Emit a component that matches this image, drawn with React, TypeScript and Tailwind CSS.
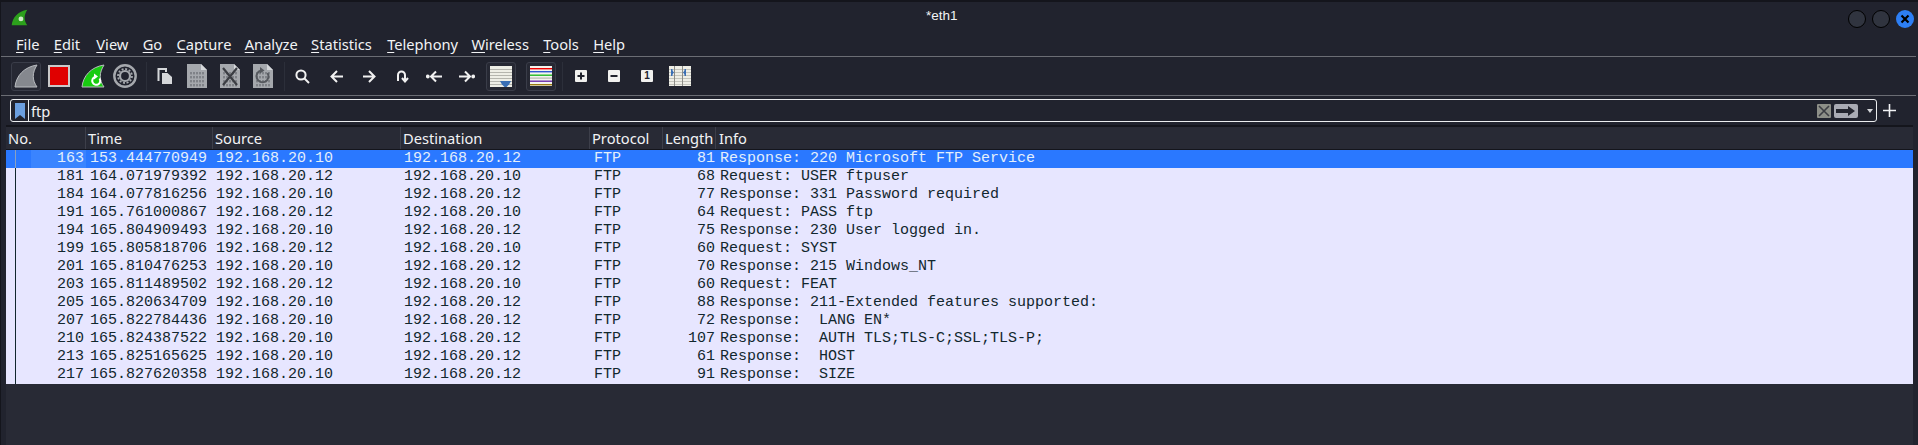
const MENUS = [
  { label: "File", gap: "" },
  { label: "Edit", gap: "" },
  { label: "View", gap: "ml-[2px]" },
  { label: "Go", gap: "" },
  { label: "Capture", gap: "" },
  { label: "Analyze", gap: "-ml-[1px]" },
  { label: "Statistics", gap: "-ml-[1px]" },
  { label: "Telephony", gap: "ml-[1px]" },
  { label: "Wireless", gap: "-ml-[1px]" },
  { label: "Tools", gap: "" },
  { label: "Help", gap: "" },
];

const COLUMNS = [
  { label: "No.", width: "w-[80px]" },
  { label: "Time", width: "w-[127px]" },
  { label: "Source", width: "w-[188px]" },
  { label: "Destination", width: "w-[189px]" },
  { label: "Protocol", width: "w-[73px]" },
  { label: "Length", width: "w-[53px]" },
];

const PACKETS = [
  ["163", "153.444770949", "192.168.20.10", "192.168.20.12", "81", "Response: 220 Microsoft FTP Service"],
  ["181", "164.071979392", "192.168.20.12", "192.168.20.10", "68", "Request: USER ftpuser"],
  ["184", "164.077816256", "192.168.20.10", "192.168.20.12", "77", "Response: 331 Password required"],
  ["191", "165.761000867", "192.168.20.12", "192.168.20.10", "64", "Request: PASS ftp"],
  ["194", "165.804909493", "192.168.20.10", "192.168.20.12", "75", "Response: 230 User logged in."],
  ["199", "165.805818706", "192.168.20.12", "192.168.20.10", "60", "Request: SYST"],
  ["201", "165.810476253", "192.168.20.10", "192.168.20.12", "70", "Response: 215 Windows_NT"],
  ["203", "165.811489502", "192.168.20.12", "192.168.20.10", "60", "Request: FEAT"],
  ["205", "165.820634709", "192.168.20.10", "192.168.20.12", "88", "Response: 211-Extended features supported:"],
  ["207", "165.822784436", "192.168.20.10", "192.168.20.12", "72", "Response:  LANG EN*"],
  ["210", "165.824387522", "192.168.20.10", "192.168.20.12", "107", "Response:  AUTH TLS;TLS-C;SSL;TLS-P;"],
  ["213", "165.825165625", "192.168.20.10", "192.168.20.12", "61", "Response:  HOST"],
  ["217", "165.827620358", "192.168.20.10", "192.168.20.12", "91", "Response:  SIZE"],
];

const FIN = "M1 23 C2 12 10 3 23 1 C18 9 18 16 23 23 Z";

function Fin({ fill, size = 24, children }: { fill: string; size?: number; children?: React.ReactNode }) {
  return (
    <svg width={size} height={size} viewBox="0 0 24 24">
      <path d={FIN} fill={fill} stroke="#b9bcc0" strokeWidth="1" />
      {children}
    </svg>
  );
}

function Sep({ className }: { className: string }) {
  return <div className={`w-px h-[29px] bg-[#2c2f3a] ${className}`} />;
}

function DocIcon({ children }: { children?: React.ReactNode }) {
  return (
    <svg width="20" height="24" viewBox="0 0 20 24">
      <path d="M0 0H14L20 6V24H0Z" fill="#a5a8ad" />
      <path d="M14 0L20 6H14Z" fill="#d5d7da" />
      <g fill="#7f8288">
        {[8, 12, 16, 20].map((y) =>
          [3, 6, 9, 12, 15].map((x) => <rect key={`${x}-${y}`} x={x} y={y} width="2" height="2.4" />)
        )}
      </g>
      {children}
    </svg>
  );
}

function ZoomBox({ children }: { children: React.ReactNode }) {
  return (
    <div className="w-[12px] h-[12px] bg-[#f1f1ef] rounded-[1px] flex items-center justify-center text-[#20222c]">
      {children}
    </div>
  );
}

function Toolbar() {
  return (
    <div className="h-[38px] flex items-center">
      <div className="ml-[10px] w-[30px] h-[29px] rounded-[3px] border border-[#3a3d49] bg-[#262833] flex items-center justify-center">
        <Fin fill="#85888e" size={24} />
      </div>
      <div className="ml-[7px] w-[22px] h-[22px] bg-[#e00000] border-[2px] border-[#c9c9c9]" />
      <div className="ml-[11px]">
        <Fin fill="#18cc10">
          <path d="M18.5 14.5 A4 4 0 1 1 14 13" fill="none" stroke="#fff" strokeWidth="2" />
          <path d="M13 9.5 L17 12.5 L13 15.5 Z" fill="#fff" />
        </Fin>
      </div>
      <svg className="ml-[8px]" width="24" height="24" viewBox="0 0 24 24">
        <circle cx="12" cy="12" r="10.7" fill="none" stroke="#a5a8ad" strokeWidth="2.4" />
        <circle cx="12" cy="12" r="5" fill="none" stroke="#a5a8ad" strokeWidth="2.2" />
        <circle cx="12" cy="12" r="7" fill="none" stroke="#a5a8ad" strokeWidth="1.8" strokeDasharray="2 1.66" />
      </svg>
      <Sep className="ml-[9px]" />
      <svg className="ml-[10px]" width="16" height="18" viewBox="0 0 16 18">
        <path d="M1.5 14V2H9V5" fill="none" stroke="#d5d7da" strokeWidth="2" />
        <path d="M5 6H10.5L15 10V17H5Z" fill="#d5d7da" />
      </svg>
      <div className="ml-[14px]">
        <DocIcon />
      </div>
      <div className="ml-[13px]">
        <DocIcon>
          <path d="M3 4L17 21M17 4L3 21" stroke="#3b3d43" strokeWidth="2.2" />
        </DocIcon>
      </div>
      <div className="ml-[13px]">
        <DocIcon>
          <path d="M14.5 9 A6 6 0 1 1 8 6.5" fill="none" stroke="#55585e" strokeWidth="2" />
          <path d="M7 3L11.5 6.5L7 9.5Z" fill="#55585e" />
        </DocIcon>
      </div>
      <Sep className="ml-[11px]" />
      <svg className="ml-[10px]" width="15" height="15" viewBox="0 0 15 15" fill="none" stroke="#f1f1f1" strokeWidth="2">
        <circle cx="6" cy="6" r="4.6" />
        <path d="M9.5 9.5L14 14" />
      </svg>
      <svg className="ml-[20px]" width="13" height="13" viewBox="0 0 13 13" fill="none" stroke="#f1f1f1" strokeWidth="2">
        <path d="M13 6.5H2M7 1L1.5 6.5L7 12" />
      </svg>
      <svg className="ml-[20px]" width="13" height="13" viewBox="0 0 13 13" fill="none" stroke="#f1f1f1" strokeWidth="2">
        <path d="M0 6.5H11M6 1L11.5 6.5L6 12" />
      </svg>
      <svg className="ml-[20px]" width="13" height="14" viewBox="0 0 13 14" fill="none" stroke="#f1f1f1" strokeWidth="2">
        <path d="M2 12V6A3.5 3.5 0 0 1 9 6V12M6 9L9 12.5L12 9" />
      </svg>
      <svg className="ml-[17px]" width="16" height="13" viewBox="0 0 16 13" fill="none" stroke="#f1f1f1" strokeWidth="2">
        <circle cx="1.8" cy="6.5" r="0.9" fill="#f1f1f1" />
        <path d="M16 6.5H6M10 1.5L5 6.5L10 11.5" />
      </svg>
      <svg className="ml-[17px]" width="16" height="13" viewBox="0 0 16 13" fill="none" stroke="#f1f1f1" strokeWidth="2">
        <path d="M0 6.5H10M6 1.5L11 6.5L6 11.5" />
        <circle cx="14.2" cy="6.5" r="0.9" fill="#f1f1f1" />
      </svg>
      <div className="ml-[11px] w-[30px] h-[29px] rounded-[3px] border border-[#3a3d49] bg-[#262833] flex items-center justify-center">
        <svg width="22" height="21" viewBox="0 0 22 21">
          <rect width="22" height="21" fill="#eeeee6" />
          <g fill="#b5b5ae">
            {[3, 6, 9, 12, 15, 18].map((y) => <rect key={y} y={y} width="22" height="1" />)}
          </g>
          <path d="M10 15H21L19 18.5L16.5 21H14.5L12 18.5Z" fill="#3a6fb5" />
        </svg>
      </div>
      <div className="ml-[10px] w-[30px] h-[29px] rounded-[3px] border border-[#3a3d49] bg-[#262833] flex items-center justify-center">
        <svg width="22" height="20" viewBox="0 0 22 20">
          <rect width="22" height="20" fill="#f4f4ee" />
          <rect y="2" width="22" height="1.4" fill="#f00000" />
          <rect y="5" width="22" height="1.4" fill="#2f55d0" />
          <rect y="8.5" width="22" height="1.4" fill="#22b822" />
          <rect y="11.5" width="22" height="1.2" fill="#b5b5ae" />
          <rect y="14.5" width="22" height="1.4" fill="#6a2aa8" />
          <rect y="18" width="22" height="1.4" fill="#9a7a10" />
        </svg>
      </div>
      <Sep className="ml-[6px]" />
      <div className="ml-[12px]">
        <ZoomBox>
          <svg width="8" height="8" viewBox="0 0 8 8"><path d="M4 0.5V7.5M0.5 4H7.5" stroke="currentColor" strokeWidth="2" /></svg>
        </ZoomBox>
      </div>
      <div className="ml-[21px]">
        <ZoomBox>
          <svg width="8" height="8" viewBox="0 0 8 8"><path d="M0.5 4H7.5" stroke="currentColor" strokeWidth="2" /></svg>
        </ZoomBox>
      </div>
      <div className="ml-[21px]">
        <ZoomBox>
          <span className="font-['Liberation_Sans',sans-serif] text-[10px] font-bold leading-none">1</span>
        </ZoomBox>
      </div>
      <svg className="ml-[16px]" width="22" height="20" viewBox="0 0 22 20">
        <rect width="22" height="20" fill="#eeeee6" />
        <g fill="#c4c4bc">
          {[3, 6, 9, 12, 15, 18].map((y) => <rect key={y} y={y} width="22" height="1" />)}
        </g>
        <rect x="5" width="1" height="20" fill="#8d8d88" />
        <rect x="13" width="1" height="20" fill="#8d8d88" />
        <path d="M2 3V10L5 6.5Z M17 3V10L14 6.5Z" fill="#3a6fb5" />
        <rect x="2" y="3" width="1.5" height="7" fill="#3a6fb5" />
        <rect x="15.5" y="3" width="1.5" height="7" fill="#3a6fb5" />
      </svg>
    </div>
  );
}

function FilterBar() {
  return (
    <div className="flex items-center pl-[9px] mt-[3px] h-[23px]">
      <div className="w-[1867px] h-[23px] border border-[#eceef0] rounded-[3px] flex items-center">
        <div className="w-[18px] h-full border-r border-[#eceef0] flex items-center justify-center shrink-0">
          <svg width="10" height="16" viewBox="0 0 10 16"><path d="M0 0H10V16L5 12L0 16Z" fill="#6b9fe0" /></svg>
        </div>
        <span className="ml-[2px] text-[14.67px] text-[#f2f3f5]">ftp</span>
        <div className="ml-auto w-[14px] h-[14px] bg-[#8d8f88] rounded-[1px] flex items-center justify-center">
          <svg width="12" height="12" viewBox="0 0 12 12"><path d="M1 1L11 11M11 1L1 11" stroke="#3b3d43" strokeWidth="1.6" /></svg>
        </div>
        <div className="ml-[3px] w-[24px] h-[14px] bg-[#a9abb4] rounded-[2px] flex items-center justify-center">
          <svg width="20" height="10" viewBox="0 0 20 10"><path d="M0 3H12V0L19 5L12 10V7H0Z" fill="#23252f" /></svg>
        </div>
        <svg className="ml-[9px] mr-[3px]" width="6" height="4" viewBox="0 0 6 4"><path d="M0 0H6L3 4Z" fill="#d5d7da" /></svg>
      </div>
      <svg className="ml-[6px]" width="13" height="13" viewBox="0 0 13 13"><path d="M6.5 0V13M0 6.5H13" stroke="#f2f3f5" strokeWidth="1.6" /></svg>
    </div>
  );
}

function PacketRow({ packet, selected }: { packet: string[]; selected: boolean }) {
  const [no, time, src, dst, len, info] = packet;
  return (
    <div
      className={`h-[18px] flex items-center whitespace-pre font-['Liberation_Mono',monospace] text-[15px] leading-[18px] ${
        selected ? "bg-[#2a78ff] text-[#e4effb]" : "bg-[#e7e6ff] text-[#12272e]"
      }`}
    >
      <div className="w-[80px] h-full relative text-right pr-[2px]">
        <div className={`absolute left-[9px] top-0 bottom-0 w-[1px] ${selected ? "bg-[#8aa0c0]" : "bg-[#12272e]"}`} />
        {selected && <div className="absolute left-[25px] right-0 top-0 bottom-0 bg-[#3a84ff]" />}
        <span className="relative">{no}</span>
      </div>
      <div className="w-[127px] pl-[4px] h-full">{time}</div>
      <div className="w-[188px] pl-[3px] h-full">{src}</div>
      <div className="w-[189px] pl-[3px] h-full">{dst}</div>
      <div className="w-[73px] pl-[4px] h-full">FTP</div>
      <div className="w-[53px] text-right pr-[1px] h-full">{len}</div>
      <div className="flex-1 pl-[4px] h-full">{info}</div>
    </div>
  );
}

export default function App() {
  return (
    <div className="w-[1918px] h-[445px] overflow-hidden bg-[#21232e] font-['Noto_Sans',sans-serif] text-[#f2f3f5] border-t-[2px] border-l border-[#14151c]">
      {/* title bar */}
      <div className="h-[33px] flex items-center relative">
        <svg className="ml-[10px] mb-[2px]" width="17" height="17" viewBox="0 0 24 24">
          <path d={FIN} fill="#2ca01c" />
          <circle cx="14" cy="14" r="3.4" fill="#cfe8c8" />
        </svg>
        <span className="absolute left-[925px] top-[4px] text-[13.5px] font-['Liberation_Sans',sans-serif]">*eth1</span>
        <div className="ml-auto flex gap-[6px] mr-[4px]">
          <div className="w-[18px] h-[18px] rounded-full bg-[#30343f] border border-black" />
          <div className="w-[18px] h-[18px] rounded-full bg-[#30343f] border border-black" />
          <div className="w-[18px] h-[18px] rounded-full bg-[#2d7ff5] flex items-center justify-center">
            <svg width="10" height="10" viewBox="0 0 10 10"><path d="M1.5 1.5L8.5 8.5M8.5 1.5L1.5 8.5" stroke="#000" strokeWidth="2.2" /></svg>
          </div>
        </div>
      </div>

      {/* menu bar */}
      <div className="h-[21px] flex items-start pl-[15px] gap-[14.3px] text-[14.67px] leading-[18px]">
        {MENUS.map((m) => (
          <span key={m.label} className={m.gap}>
            <span className="underline underline-offset-2">{m.label[0]}</span>
            {m.label.slice(1)}
          </span>
        ))}
      </div>
      <div className="h-px bg-[#6b6d74] mr-[2px]" />

      <Toolbar />
      <div className="h-px bg-[#6b6d74] mr-[2px]" />

      <FilterBar />

      {/* packet list */}
      <div className="ml-[5px] mt-[3px] mr-[5px] border-t-[2px] border-[#14151c] bg-[#282a35]">
        <div className="h-[23px] flex items-center border-b border-[#14151c] text-[14.67px]">
          {COLUMNS.map((c) => (
            <div key={c.label} className={`${c.width} h-full pl-[2px] border-r border-[#3d3f4a] leading-[22px]`}>
              {c.label}
            </div>
          ))}
          <div className="flex-1 pl-[3px] leading-[22px]">Info</div>
        </div>
        {PACKETS.map((p, i) => (
          <PacketRow key={p[0]} packet={p} selected={i === 0} />
        ))}
      </div>
      <div className="ml-[5px] mr-[5px] h-[70px] bg-[#282a35]" />
    </div>
  );
}
